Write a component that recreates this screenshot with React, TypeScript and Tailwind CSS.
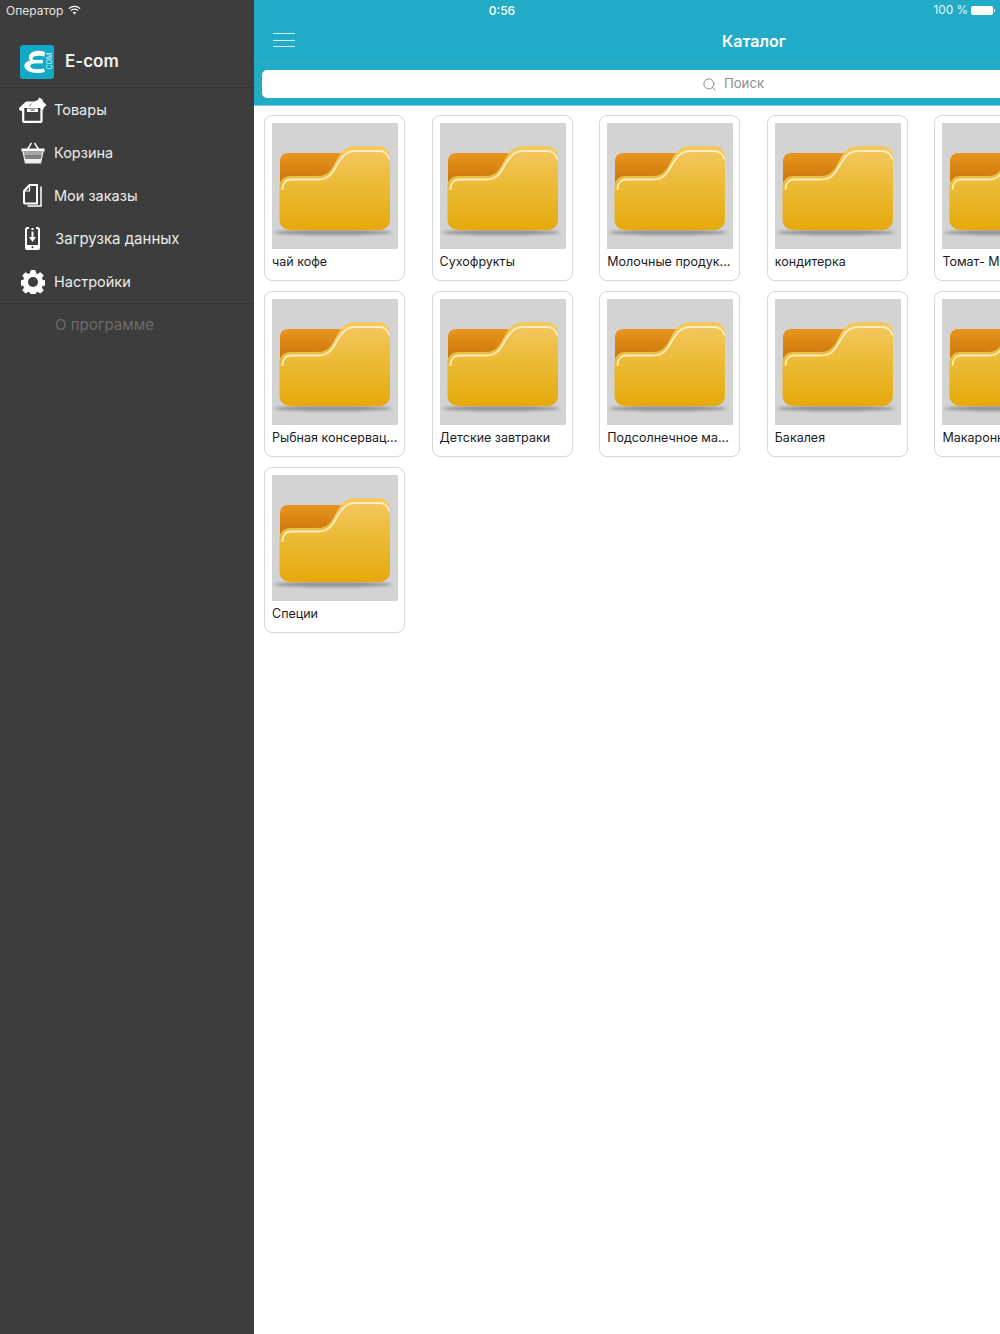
import { Search } from 'lucide-react';

const categories = [
  'чай кофе',
  'Сухофрукты',
  'Молочные продук...',
  'кондитерка',
  'Томат- Макаронные',
  'Рыбная консервац...',
  'Детские завтраки',
  'Подсолнечное ма...',
  'Бакалея',
  'Макаронные изделия',
  'Специи',
];

// Folder artwork on the grey placeholder
const FolderImage = ({ id }: { id: number }) => (
  <svg viewBox="0 0 126 126" className="block h-[126px] w-[126px]">
    <defs>
      <linearGradient id={`front${id}`} x1="0" y1="0" x2="0" y2="1">
        <stop offset="0" stopColor="#f4c963" />
        <stop offset="0.55" stopColor="#eab82f" />
        <stop offset="1" stopColor="#e5a90c" />
      </linearGradient>
      <linearGradient id={`back${id}`} x1="0" y1="0" x2="0" y2="1">
        <stop offset="0" stopColor="#e8951f" />
        <stop offset="1" stopColor="#c9740a" />
      </linearGradient>
      <filter id={`blur${id}`} x="-10%" y="-100%" width="120%" height="300%">
        <feGaussianBlur stdDeviation="1.6" />
      </filter>
    </defs>
    <rect width="126" height="126" fill="#d3d3d3" />
    <ellipse cx="61" cy="109.5" rx="59" ry="2.6" fill="#8f8f8f" filter={`url(#blur${id})`} />
    <path d="M8 60V38a8 8 0 0 1 8-8H80V60Z" fill={`url(#back${id})`} />
    <path
      d="M7.500 97V63a10 10 0 0 1 10-10H46c9 0 13-5 18-15 5-10 10-15 19-15h25a10 10 0 0 1 10 10v64a10 10 0 0 1-10 10H17.500a10 10 0 0 1-10-10Z"
      fill={`url(#front${id})`}
    />
    <path
      d="M10.500 66c0-6 4-9.500 8-9.500H46c9 0 13-4 18-13 5-9 10-15.500 19-15.500h24c5 0 9 3 10 7.500"
      fill="none"
      stroke="#fdeebf"
      strokeWidth="1.800"
      strokeLinecap="round"
    />
  </svg>
);

const CategoryCard = ({ name, id }: { name: string; id: number }) => (
  <div className="h-[166px] w-[141px] rounded-lg border border-[#d6d6d6] bg-white px-[7px] pt-[7px]">
    <FolderImage id={id} />
    <div className="mt-[4px] whitespace-nowrap text-[12.5px] leading-[18px] text-[#1c1c1c]">{name}</div>
  </div>
);

const Logo = () => (
  <svg viewBox="0 0 34 34" className="h-[34px] w-[34px]">
    <rect width="34" height="34" rx="3" fill="#11a9c6" />
    <path
      d="M25 7C18 4.500 11 6 9 11c-.7 2 0 3.500 1.500 4.500C7 16 4 18 4.500 21.500 5.500 27 15 29.500 25 27l-1-3.500c-6 1.500-12 .8-13.500-1.500-1-1.800 1-3.300 3.500-3.500l9-.3-.3-3.400-7.700.2c-2 0-2.800-1-2.300-2.200.9-2 6.300-3 11.800-1.300Z"
      fill="#fff"
    />
    <text transform="translate(31.500 24.500) rotate(-90)" fontSize="7" fill="#d8f3f8" fontFamily="Inter, sans-serif">
      COM
    </text>
  </svg>
);

const BoxIcon = () => (
  <svg viewBox="0 0 29 26" className="h-[26px] w-[29px]">
    <path d="M1 11 8 4.500h8L9.500 10 5 11v3L1.500 13.500Z" fill="#fff" />
    <path d="M15 5l5-2 1-2.500 3 1.500 1 2.500 3.500 3.500-3 3v2l-2-1V9H12Z" fill="#fff" />
    <path d="M5.200 9.800h18.300V24a.8.8 0 0 1-.8.8H6a.8.8 0 0 1-.8-.8Z" fill="none" stroke="#fff" strokeWidth="2.200" />
    <path d="M9 11.500h11v3.500H9Z" fill="#fff" />
    <path d="M12.500 12.500h4v1h-4Z" fill="#3d3d3d" />
  </svg>
);

const BasketIcon = () => (
  <svg viewBox="0 0 24 22" className="h-[22px] w-[24px]">
    <path d="M6 8 10.500 1M18 8 13.500 1" stroke="#fff" strokeWidth="1.400" fill="none" />
    <path d="M.5 6.500h23v3H.5Z" fill="#fff" />
    <path d="M2 9.500h20l-1 4H3Z" fill="#a8a8a8" />
    <path d="M3 13.500h18l-.8 3.500H3.800Z" fill="#808080" />
    <path d="M3.800 17h16.400l-1 4.500H4.800Z" fill="#efefef" />
    <path d="M2 9.500 4.500 21.500M22 9.500 19.500 21.500" stroke="#f2f2f2" strokeWidth="1.200" fill="none" />
  </svg>
);

const OrdersIcon = () => (
  <svg viewBox="0 0 19 23" className="h-[23px] w-[19px]">
    <path d="M1 7 6.500 1H14v18.500H2a1 1 0 0 1-1-1Z" fill="none" stroke="#fff" strokeWidth="2" />
    <path d="M18 2.500V22H4.500" fill="none" stroke="#fff" strokeWidth="1.500" />
    <path d="M6.500 1v6H1" fill="none" stroke="#fff" strokeWidth="1.200" />
  </svg>
);

const DownloadIcon = () => (
  <svg viewBox="0 0 15 23" className="h-[23px] w-[15px]">
    <path d="M4 1H2.500A1.500 1.500 0 0 0 1 2.500V21a1 1 0 0 0 1 1h11a1 1 0 0 0 1-1V2.500A1.500 1.500 0 0 0 12.500 1H11" fill="none" stroke="#fff" strokeWidth="2" />
    <rect x="1" y="18" width="13" height="4.500" fill="#fff" />
    <circle cx="7.500" cy="20.200" r="1" fill="#3d3d3d" />
    <path d="M7.500 1v2M7.500 4.500v6" stroke="#fff" strokeWidth="2" />
    <path d="M4 10h7l-3.500 5Z" fill="#fff" />
  </svg>
);

const GearIcon = () => (
  <svg viewBox="0 0 24 24" className="h-[24px] w-[24px]">
    <path
      d="M10 .5h4l.6 3 2.200.9 2.600-1.700 2.800 2.800-1.700 2.600.9 2.200 3 .6v4l-3 .6-.9 2.200 1.700 2.600-2.800 2.800-2.600-1.700-2.200.9-.6 3h-4l-.6-3-2.200-.9-2.600 1.700-2.800-2.800 1.700-2.600-.9-2.200-3-.6v-4l3-.6.9-2.200-1.700-2.600 2.800-2.800 2.600 1.700 2.200-.9Z"
      fill="#fff"
      stroke="#fff"
      strokeLinejoin="round"
    />
    <circle cx="12" cy="12" r="5" fill="#3d3d3d" />
  </svg>
);

const menu = [
  { label: 'Товары', icon: <BoxIcon />, text: 'text-[14.5px]' },
  { label: 'Корзина', icon: <BasketIcon />, text: 'text-[14.5px]' },
  { label: 'Мои заказы', icon: <OrdersIcon />, text: 'text-[14.5px]' },
  { label: 'Загрузка данных', icon: <DownloadIcon />, text: 'pl-[1px] pt-[1px] text-[15px]' },
  { label: 'Настройки', icon: <GearIcon />, text: 'text-[14.5px]' },
];

const StatusBar = () => (
  <div className="absolute inset-x-0 top-0 z-10 grid h-[21px] grid-cols-3 items-center px-[6px] text-[12px] text-white">
    <div className="flex items-center gap-[5px] text-[#e4e4e4]">
      Оператор
      <svg viewBox="0 0 14 10" className="mb-[2px] h-[10px] w-[13px]">
        <path d="M1 3.500a8.500 8.500 0 0 1 12 0M3 5.700a5.500 5.500 0 0 1 8 0" fill="none" stroke="#fff" strokeWidth="1.300" />
        <path d="M5 7.700a3 3 0 0 1 4 0L7 9.800Z" fill="#fff" />
      </svg>
    </div>
    <div className="pl-[4px] text-center font-medium">0:56</div>
    <div className="-mr-[1px] flex items-center justify-end gap-[3px]">
      <span className="pt-[1px] text-[11.8px] text-[#e6f6fa]">100 %</span>
      <div className="flex items-center">
        <div className="h-[9px] w-[22px] rounded-[2px] bg-white" />
        <div className="ml-[1px] h-[3px] w-[1px] bg-white" />
      </div>
    </div>
  </div>
);

export default function App() {
  return (
    <div className="relative flex h-[1334px] w-[1000px] overflow-hidden bg-white font-['Inter','Liberation_Sans',sans-serif]">
      <StatusBar />

      {/* Side menu */}
      <aside className="w-[254px] shrink-0 bg-[#3d3d3d] pt-[20px]">
        <div className="flex h-[68px] items-end gap-[11px] border-b border-[#333333] pb-[8px] pl-[20px]">
          <Logo />
          <span className="pb-[6px] text-[17px] font-semibold leading-[24px] text-[#f2f2f2]">E-com</span>
        </div>
        <nav className="border-b border-[#333333]">
          {menu.map((item) => (
            <div key={item.label} className="flex h-[43px] items-center">
              <span className="flex w-[54px] shrink-0 justify-center pl-[11px]">{item.icon}</span>
              <span className={`${item.text} text-[#ececec]`}>{item.label}</span>
            </div>
          ))}
        </nav>
        <div className="flex h-[42px] items-center pl-[55px] text-[15px] text-[#6c6c6c]">О программе</div>
      </aside>

      {/* Catalog, 1000 wide and pushed aside by the menu */}
      <main className="w-[1000px] shrink-0">
        <div className="border-b border-[#7fd0e0] bg-[#22abc7] pt-[20px]">
          <div className="relative flex h-[43px] items-center justify-center border-b border-[#2cb0cb]">
            <div className="absolute left-[19px] top-[13px] flex w-[22px] flex-col gap-[5.5px]">
              <span className="h-[1px] bg-[#cfeef5]" />
              <span className="h-[1px] bg-[#cfeef5]" />
              <span className="h-[1px] bg-[#cfeef5]" />
            </div>
            <h1 className="text-[16px] font-semibold text-white">Каталог</h1>
          </div>
          <div className="px-[8px] pb-[7px] pt-[7px]">
            <div className="flex h-[28px] items-center justify-center gap-[7px] rounded-[5px] bg-white pr-[42px] text-[13.2px] text-[#8e8e93]">
              <Search size={15} strokeWidth={1.6} />
              Поиск
            </div>
          </div>
        </div>
        <div className="grid grid-cols-[repeat(5,141px)] gap-x-[26.6px] gap-y-[10px] pl-[10px] pt-[9px]">
          {categories.map((name, i) => (
            <CategoryCard key={name} name={name} id={i} />
          ))}
        </div>
      </main>
    </div>
  );
}
